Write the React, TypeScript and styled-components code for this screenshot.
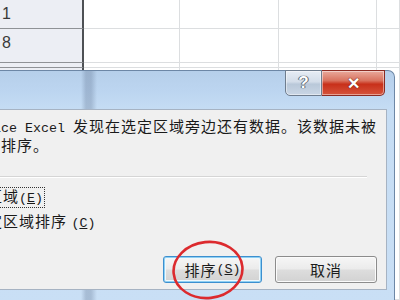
import React from "react";
import styled, { createGlobalStyle } from "styled-components";

const GlobalStyle = createGlobalStyle`
  html, body {
    margin: 0;
    padding: 0;
    background: #ffffff;
  }
`;

const Page = styled.div`
  position: relative;
  width: 400px;
  height: 300px;
  overflow: hidden;
  background: #ffffff;
  font-family: "Noto Sans CJK SC", "Liberation Sans", sans-serif;
`;

const Sheet = styled.div`
  display: grid;
  grid-template-columns: 84px 96px 99px 98px 1fr;
  grid-template-rows: 29px 34px 5px 1fr;
  height: 300px;
`;

const Cell = styled.div<{ $selected?: boolean }>`
  box-sizing: border-box;
  background: ${(p) => (p.$selected ? "#eceef4" : "#ffffff")};
  border-bottom: 1px solid ${(p) => (p.$selected ? "#8f9296" : "#dcdee0")};
  border-right: ${(p) =>
    p.$selected ? "2px solid #4e5155" : "1px solid #dcdee0"};
  font-family: "Liberation Sans", sans-serif;
  font-size: 16px;
  line-height: 28px;
  color: #3a3a3a;
  padding-left: 2px;
`;

const Window = styled.div`
  position: absolute;
  left: -140px;
  top: 70px;
  width: 535px;
  height: 240px;
  box-sizing: border-box;
  border: 1px solid #6d87a6;
  border-bottom: none;
  border-radius: 0 7px 0 0;
  background:
    linear-gradient(90deg, rgba(255,255,255,0) 0px, rgba(255,255,255,0) 220px, rgba(90,110,140,0.3) 225px, rgba(90,110,140,0.3) 230px, rgba(255,255,255,0) 236px),
    linear-gradient(180deg, #b6cfea 0px, #bcd5f0 20px, #c6ddf4 40px, #c9dff5 100%);
  padding: 0 7px 0 7px;
  display: flex;
  flex-direction: column;
`;

const TitleBar = styled.div`
  height: 38px;
  display: flex;
  justify-content: flex-end;
  align-items: flex-start;
  padding-right: 2px;
`;

const CaptionButton = styled.div<{ $kind: "help" | "close" }>`
  box-sizing: border-box;
  height: 26px;
  width: ${(p) => (p.$kind === "help" ? "37px" : "63px")};
  margin-top: -1px;
  display: flex;
  align-items: center;
  justify-content: center;
  border: 1px solid ${(p) => (p.$kind === "help" ? "#6f7d8e" : "#8a2a22")};
  border-left: ${(p) => (p.$kind === "close" ? "none" : undefined)};
  border-radius: ${(p) => (p.$kind === "help" ? "0 0 0 5px" : "0 0 5px 0")};
  background: ${(p) =>
    p.$kind === "help"
      ? "linear-gradient(180deg, #e6edf5 0%, #d3dde9 45%, #b9c8d9 55%, #c9d6e5 100%)"
      : "linear-gradient(180deg, #e9a99c 0%, #d9735f 40%, #c8301a 55%, #d6543c 100%)"};
  box-shadow: inset 0 0 0 1px rgba(255, 255, 255, 0.45);
  font-family: "Liberation Sans", sans-serif;
  font-weight: bold;
  font-size: ${(p) => (p.$kind === "help" ? "17px" : "16px")};
  color: #ffffff;
  text-shadow: ${(p) =>
    p.$kind === "help"
      ? "0 0 1px #505a66, 0 0 1px #505a66, 1px 0 0 #6a7480, -1px 0 0 #6a7480"
      : "0 0 1px #6a1a10, 0 0 1px #6a1a10"};
`;

const Body = styled.div`
  box-sizing: border-box;
  height: 181px;
  background: #f0f0f0;
  border: 1px solid #a6b3c3;
  padding: 8px 9px 0 20px;
  display: flex;
  flex-direction: column;
  color: #1a1a1a;
`;

const Message = styled.div`
  font-size: 15px;
  letter-spacing: 1px;
  line-height: 16px;
  white-space: nowrap;
`;

const Latin = styled.span`
  font-family: "Liberation Mono", monospace;
  font-size: 13.33px;
  letter-spacing: 0;
`;

const Separator = styled.div`
  height: 1px;
  margin: 23px 10px 0 0;
  background: #d5d5d5;
  border-bottom: 1px solid #ffffff;
`;

const Options = styled.div`
  display: flex;
  flex-direction: column;
  gap: 5px;
  margin-top: 9px;
  padding-left: 13px;
`;

const OptionRow = styled.div`
  display: flex;
  align-items: center;
  gap: 7px;
  height: 20px;
`;

const Radio = styled.span<{ $checked?: boolean }>`
  box-sizing: border-box;
  width: 13px;
  height: 13px;
  border-radius: 50%;
  border: 1px solid #8a96a4;
  background: ${(p) =>
    p.$checked
      ? "radial-gradient(circle, #2a64b0 0 3px, #f4f4f4 4px)"
      : "#f4f4f4"};
`;

const OptionLabel = styled.span<{ $focused?: boolean }>`
  font-size: 15px;
  letter-spacing: 1px;
  line-height: 16px;
  padding: 0 1px;
  outline: ${(p) => (p.$focused ? "1px dotted #333" : "none")};
  outline-offset: 0;
`;

const Key = styled.span`
  font-family: "Liberation Mono", monospace;
  font-size: 13.33px;
  letter-spacing: 0;
  u {
    text-decoration: underline;
  }
`;

const Buttons = styled.div`
  display: flex;
  justify-content: flex-end;
  gap: 13px;
  margin-top: 24px;
`;

const Button = styled.div<{ $default?: boolean }>`
  box-sizing: border-box;
  width: ${(p) => (p.$default ? "99px" : "102px")};
  height: 27px;
  border-radius: 3px;
  border: 1px solid ${(p) => (p.$default ? "#3c8fcf" : "#8c8c8c")};
  background: linear-gradient(180deg, #f6f6f6 0%, #ebebeb 48%, #dddddd 52%, #d2d2d2 100%);
  box-shadow: ${(p) =>
    p.$default
      ? "inset 0 0 0 1px #8fd0f3, inset 0 0 0 2px #f0f8fc"
      : "inset 0 0 0 1px #fbfbfb"};
  display: flex;
  align-items: center;
  justify-content: center;
  font-size: 15px;
  letter-spacing: 1px;
  color: #1c1c1c;
`;

const Annotation = styled.svg`
  position: absolute;
  left: 170px;
  top: 239px;
  width: 76px;
  height: 64px;
  pointer-events: none;
`;

export default function App() {
  const rows = [
    ["1", "", "", "", ""],
    ["8", "", "", "", ""],
    ["", "", "", "", ""],
    ["", "", "", "", ""],
  ];
  return (
    <Page>
      <GlobalStyle />
      <Sheet>
        {rows.map((row, r) =>
          row.map((v, c) => (
            <Cell key={r + "-" + c} $selected={c === 0}>
              {v}
            </Cell>
          ))
        )}
      </Sheet>

      <Window>
        <TitleBar>
          <CaptionButton $kind="help">?</CaptionButton>
          <CaptionButton $kind="close">✕</CaptionButton>
        </TitleBar>
        <Body>
          <Message>
            <Latin>Microsoft Office Excel </Latin>发现在选定区域旁边还有数据。该数据未被
          </Message>
          <Message>选择，将不参加排序。</Message>
          <Separator />
          <Options>
            <OptionRow>
              <Radio $checked />
              <OptionLabel $focused>
                扩展选定区域<Key>(<u>E</u>)</Key>
              </OptionLabel>
            </OptionRow>
            <OptionRow>
              <Radio />
              <OptionLabel>
                以当前选定区域排序 <Key>(<u>C</u>)</Key>
              </OptionLabel>
            </OptionRow>
          </Options>
          <Buttons>
            <Button $default>
              排序<Key>(<u>S</u>)</Key>
            </Button>
            <Button>取消</Button>
          </Buttons>
        </Body>
      </Window>

      <Annotation viewBox="0 0 76 64">
        <ellipse
          cx="38"
          cy="31"
          rx="34.5"
          ry="28"
          fill="none"
          stroke="#dc2a2e"
          strokeWidth="2.6"
          transform="rotate(-6 38 31)"
        />
      </Annotation>
    </Page>
  );
}
